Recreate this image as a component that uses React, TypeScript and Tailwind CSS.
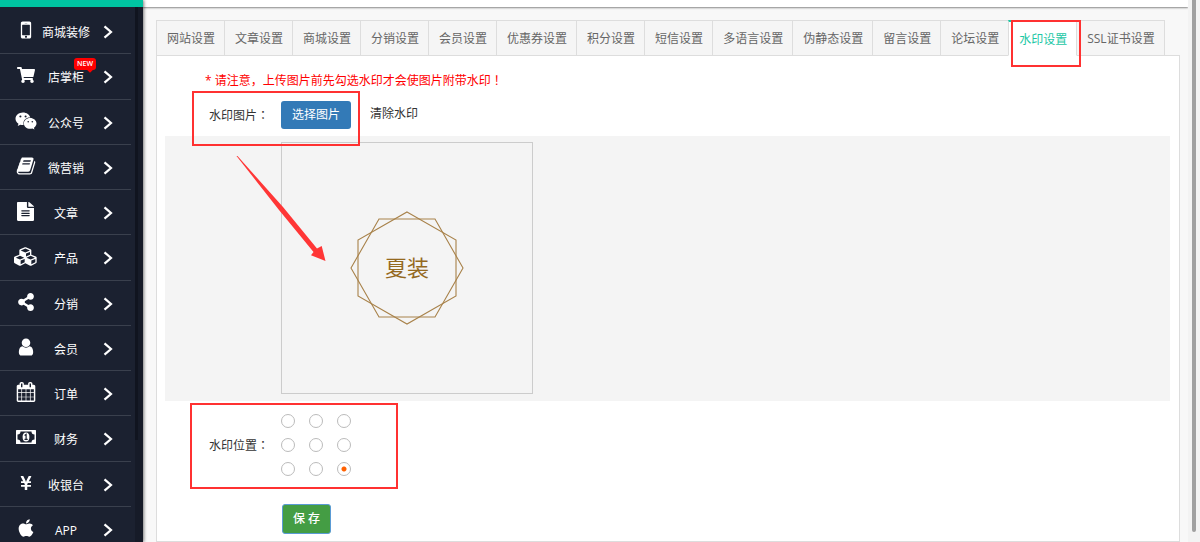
import { useState } from "react";
import type { ReactNode } from "react";
import { FaApple, FaFileAlt, FaShareAlt, FaShoppingCart, FaWeixin, FaYenSign } from "react-icons/fa";

function Glyph({ d, box = "0 0 1792 1792", className }: { d: string; box?: string; className: string }) {
  return (
    <svg viewBox={box} fill="currentColor" className={className} aria-hidden="true">
      <path d={d} />
    </svg>
  );
}

const MOBILE =
  "M976 1408q0-33-23.5-56.5t-56.5-23.5-56.5 23.5-23.5 56.5 23.5 56.5 56.5 23.5 56.5-23.5 23.5-56.5zm208-160v-704q0-13-9.5-22.5t-22.5-9.5h-512q-13 0-22.5 9.500t-9.500 22.500v704q0 13 9.500 22.500t22.500 9.500h512q13 0 22.500-9.500t9.500-22.500zm-192-848q0-16-16-16h-160q-16 0-16 16t16 16h160q16 0 16-16zm288-16v1024q0 52-38 90t-90 38h-512q-52 0-90-38t-38-90v-1024q0-52 38-90t90-38h512q52 0 90 38t38 90z";
const BOOK =
  "M1703 478q40 57 18 129l-275 906q-19 64-76.5 107.5t-122.5 43.5h-923q-77 0-148.5-53.5t-99.5-131.5q-24-67-2-127 0-4 3-27t4-37q1-8-3-21.5t-3-19.5q2-11 8-21t16.5-23.5 16.5-23.5q23-38 45-91.5t30-91.5q3-10 .5-30t-.5-28q3-11 17-28t17-23q21-36 42-92t25-90q1-9-2.5-32t.5-28q4-13 22-30.5t22-22.5q19-26 42.5-84.5t27.5-96.5q1-8-3-25.5t-2-26.5q2-8 9-18t18-23 17-21q8-12 16.5-30.5t15-35 16-36 19.5-32 26.5-23.5 36-11.500 47.500 5.500l-1 3q38-9 51-9h761q74 0 114 56t18 130l-274 906q-36 119-71.500 153.500t-128.500 34.500h-869q-27 0-38 15-11 16-1 43 24 70 144 70h923q29 0 56-15.500t35-41.500l300-987q7-22 5-57 38 15 59 43zm-1064 2q-4 13 2 22.500t20 9.500h608q13 0 25.500-9.500t16.500-22.500l21-64q4-13-2-22.500t-20-9.500h-608q-13 0-25.500 9.500t-16.500 22.500zm-83 256q-4 13 2 22.500t20 9.500h608q13 0 25.500-9.500t16.500-22.500l21-64q4-13-2-22.500t-20-9.500h-608q-13 0-25.500 9.500t-16.500 22.500z";
const CUBES =
  "M640 1632l384-192v-314l-384 164v342zm-64-454l404-173-404-173-404 173zm1088 454l384-192v-314l-384 164v342zm-64-454l404-173-404-173-404 173zm-448-293l384-165v-266l-384 164v267zm-64-379l441-189-441-189-441 189zm1088 518v416q0 36-19 67t-52 47l-448 224q-25 14-57 14t-57-14l-448-224q-5-2-7-4-2 2-7 4l-448 224q-25 14-57 14t-57-14l-448-224q-33-16-52-47t-19-67v-416q0-38 21.500-70t56.500-48l434-186v-400q0-38 21.500-70t56.500-48l448-192q23-10 50-10t50 10l448 192q35 16 56.500 48t21.500 70v400l434 186q36 16 57 48t21 70z";
const USER =
  "M1536 1399q0 109-62.5 187t-150.5 78h-854q-88 0-150.5-78t-62.5-187q0-85 8.5-160.5t31.500-152 58.500-131 94-89 134.500-34.500q131 128 313 128t313-128q76 0 134.500 34.500t94 89 58.500 131 31.500 152 8.500 160.500zm-256-887q0 159-112.500 271.500t-271.500 112.500-271.500-112.500-112.500-271.500 112.500-271.500 271.500-112.500 271.500 112.500 112.500 271.500z";
const CALENDAR =
  "M192 1664h288v-288h-288v288zm352 0h320v-288h-320v288zm-352-352h288v-320h-288v320zm352 0h320v-320h-320v320zm-352-384h288v-288h-288v288zm736 736h320v-288h-320v288zm-384-736h320v-288h-320v288zm768 736h288v-288h-288v288zm-384-352h320v-320h-320v320zm-352-864v-288q0-13-9.500-22.500t-22.500-9.500h-64q-13 0-22.500 9.500t-9.500 22.500v288q0 13 9.500 22.500t22.500 9.500h64q13 0 22.500-9.500t9.500-22.500zm736 864h288v-320h-288v320zm-384-384h320v-288h-320v288zm384 0h288v-288h-288v288zm32-480v-288q0-13-9.500-22.500t-22.500-9.500h-64q-13 0-22.500 9.500t-9.500 22.500v288q0 13 9.500 22.500t22.500 9.500h64q13 0 22.500-9.500t9.500-22.500zm384-64v1280q0 52-38 90t-90 38h-1408q-52 0-90-38t-38-90v-1280q0-52 38-90t90-38h128v-96q0-66 47-113t113-47h64q66 0 113 47t47 113v96h384v-96q0-66 47-113t113-47h64q66 0 113 47t47 113v96h128q52 0 90 38t38 90z";

function Banknote() {
  return (
    <svg viewBox="0 0 20 14" className="h-3.5 w-5" aria-hidden="true">
      <rect width="20" height="14" rx="0.5" fill="currentColor" />
      <path d="M4.500 1.500h11a3 3 0 0 0 3 3v5a3 3 0 0 0-3 3h-11a3 3 0 0 0-3-3v-5a3 3 0 0 0 3-3z" fill="#1b2130" />
      <ellipse cx="10" cy="7" rx="3.400" ry="4.500" fill="currentColor" />
      <path d="M8.600 5.400 10.100 4.400V9M8.500 9.300h3.200" fill="none" stroke="#1b2130" strokeWidth="1.200" />
    </svg>
  );
}

const menu: { label: string; icon: ReactNode; isNew?: boolean }[] = [
  { label: "商城装修", icon: <Glyph d={MOBILE} className="size-6" /> },
  { label: "店掌柜", icon: <FaShoppingCart className="size-[18px]" />, isNew: true },
  { label: "公众号", icon: <FaWeixin className="size-[22px]" /> },
  { label: "微营销", icon: <Glyph d={BOOK} className="size-5" /> },
  { label: "文章", icon: <FaFileAlt className="h-[19px] w-[17px]" preserveAspectRatio="none" /> },
  { label: "产品", icon: <Glyph d={CUBES} box="0 0 2304 1792" className="h-[19px] w-6" /> },
  { label: "分销", icon: <FaShareAlt className="size-[18px]" /> },
  { label: "会员", icon: <Glyph d={USER} className="size-5" /> },
  { label: "订单", icon: <Glyph d={CALENDAR} className="size-5" /> },
  { label: "财务", icon: <Banknote /> },
  { label: "收银台", icon: <FaYenSign className="size-4" /> },
  { label: "APP", icon: <FaApple className="size-5" /> },
];

const tabs = [
  "网站设置",
  "文章设置",
  "商城设置",
  "分销设置",
  "会员设置",
  "优惠券设置",
  "积分设置",
  "短信设置",
  "多语言设置",
  "伪静态设置",
  "留言设置",
  "论坛设置",
  "水印设置",
  "SSL证书设置",
];

const positions = ["左上", "中上", "右上", "左中", "正中", "右中", "左下", "中下", "右下"];

// centred full-width punctuation
function Punct({ children }: { children: string }) {
  return <span className="font-['Noto_Sans_CJK_TC',sans-serif]">{children}</span>;
}

function Sidebar() {
  return (
    <aside className="relative z-10 w-[143px] shrink-0 overflow-hidden border-t-[7px] border-[#00c4a1] bg-[#1b2130] shadow-[1px_0_3px_rgba(0,0,0,0.5)]">
      <nav className="mt-0.5 grid h-[543px] w-[131px] auto-rows-fr">
        {menu.map((item) => (
          <a
            key={item.label}
            href="#"
            className="relative flex items-center border-b border-[#3a404d] text-xs text-white"
          >
            <span className="flex w-[51px] shrink-0 justify-center pb-0.5">{item.icon}</span>
            <span className="-mx-[9px] w-12 shrink-0 pt-1 text-center">{item.label}</span>
            {item.isNew && (
              <span className="absolute top-1 left-[74px] h-3 rounded-[3px] bg-[#ff0000] px-[3px] text-[7px] leading-3 font-semibold">
                NEW
                <span className="absolute right-1 -bottom-0.5 size-1 rotate-45 bg-[#ff0000]" />
              </span>
            )}
            <svg
              viewBox="0 0 10 14"
              className="mt-0.5 ml-[22px] h-3.5 w-2.5"
              fill="none"
              stroke="currentColor"
              strokeWidth="2.2"
              aria-hidden="true"
            >
              <path d="M1.500 1.300 8 7 1.500 12.700" />
            </svg>
          </a>
        ))}
      </nav>
      <div className="absolute top-0 right-0 h-full w-2 bg-[#161b28]" />
      <div className="absolute top-0 right-[5px] h-[433px] w-[3px] bg-[#10141f]" />
    </aside>
  );
}

function Watermark() {
  return (
    <div className="relative flex size-[252px] items-center justify-center border border-[#cccccc]">
      <svg
        viewBox="-58 -58 116 116"
        className="absolute size-[116px]"
        fill="none"
        stroke="#a8824a"
        strokeWidth="1.1"
        aria-hidden="true"
      >
        <polygon points="0,-56 49,-28 49,28 0,56 -49,28 -49,-28" />
        <polygon points="-56,0 -28,-49 28,-49 56,0 28,49 -28,49" />
      </svg>
      <span className="pb-0.5 text-[22px] leading-8 text-[#94691f]">夏装</span>
    </div>
  );
}

export default function App() {
  const [position, setPosition] = useState("右下");

  return (
    <div className="flex h-screen overflow-hidden bg-[#f8f8f8] font-['Open_Sans','Noto_Sans_CJK_SC',sans-serif] text-xs text-[#333333]">
      <Sidebar />

      <div className="flex min-w-0 flex-1 flex-col">
        <header className="h-[7px] shrink-0 bg-white shadow-[0_1px_2px_rgba(0,0,0,0.45)]" />

        <main className="flex flex-1 flex-col pt-[13px] pr-2 pl-[13px]">
          <div role="tablist" className="relative z-10 -mb-px flex">
            {tabs.map((tab) =>
              tab === "水印设置" ? (
                <button
                  key={tab}
                  role="tab"
                  aria-selected="true"
                  className="relative -mr-px h-9 shrink-0 border border-t-2 border-[#dddddd] border-t-[#1cc7a5] border-b-white bg-white pt-0.5 pr-[9px] pl-2.5 text-[#1cc7a5]"
                >
                  {tab}
                  <span className="absolute -top-0.5 left-0.5 h-[47px] w-[70px] border-2 border-[#ff3131]" />
                </button>
              ) : (
                <button
                  key={tab}
                  role="tab"
                  aria-selected="false"
                  className="-mr-px h-9 shrink-0 border border-[#dddddd] bg-[#f5f5f5] pt-0.5 pr-[9px] pl-2.5 text-[#666666]"
                >
                  {tab}
                </button>
              ),
            )}
          </div>

          <section className="border border-[#dddddd] bg-white pt-[14px] pr-[9px] pb-[7px] pl-2">
            <p className="h-5 pl-10 leading-5 text-[#ff0000]">
              * 请注意，上传图片前先勾选水印才会使图片附带水印<Punct>！</Punct>
            </p>

            <div className="relative z-10 flex h-[46px] items-center">
              <span className="w-[116px] shrink-0 pt-1 pl-11">
                水印图片<Punct>：</Punct>
              </span>
              <button className="mt-1 h-7 rounded-[3px] bg-[#337ab7] px-[11px] text-white">选择图片</button>
              <button className="ml-[19px] pt-0.5">清除水印</button>
              <span className="pointer-events-none absolute top-px left-[27px] h-[55px] w-[168px] border-2 border-[#ff3131]" />
            </div>

            <div className="relative bg-[#f4f4f4] pt-1.5 pb-[7px] pl-[116px]">
              <Watermark />
              <svg
                viewBox="236 155 92 108"
                className="absolute top-[19px] left-[71px] h-[108px] w-[92px]"
                fill="#ff3636"
                aria-hidden="true"
              >
                <path d="M236.500 156 L237.500 156 L283 207 L317 248.500 L321.700 246 L325.500 261 L311 255.300 L313.500 252 L279 210 Z" />
              </svg>
            </div>

            <div className="relative flex h-22 items-center">
              <span id="position-label" className="w-[116px] shrink-0 pl-11">
                水印位置<Punct>：</Punct>
              </span>
              <div role="radiogroup" aria-labelledby="position-label" className="grid grid-cols-3 gap-x-3.5 gap-y-2.5">
                {positions.map((p) => (
                  <input
                    key={p}
                    type="radio"
                    name="position"
                    aria-label={p}
                    checked={position === p}
                    onChange={() => setPosition(p)}
                    className="size-3.5 appearance-none rounded-full border border-[#bbbbbb] bg-white checked:bg-[radial-gradient(circle,#ff6000_2px,transparent_3px)]"
                  />
                ))}
              </div>
              <span className="pointer-events-none absolute top-0.5 left-[25px] h-[86px] w-[208px] border-2 border-[#ff3131]" />
            </div>

            <button className="mt-[15px] ml-[117px] block h-[30px] rounded-[3px] border border-[#5a9bd5] bg-[#449d44] px-2.5 font-medium text-white">
              保 存
            </button>
          </section>
        </main>
      </div>

      {/* page scrollbar */}
      <div className="w-3 shrink-0 bg-[#f3f3f3] pb-2.5 pl-1">
        <div className="h-full w-1 rounded-b-sm bg-[#a0a0a0]" />
      </div>
    </div>
  );
}
